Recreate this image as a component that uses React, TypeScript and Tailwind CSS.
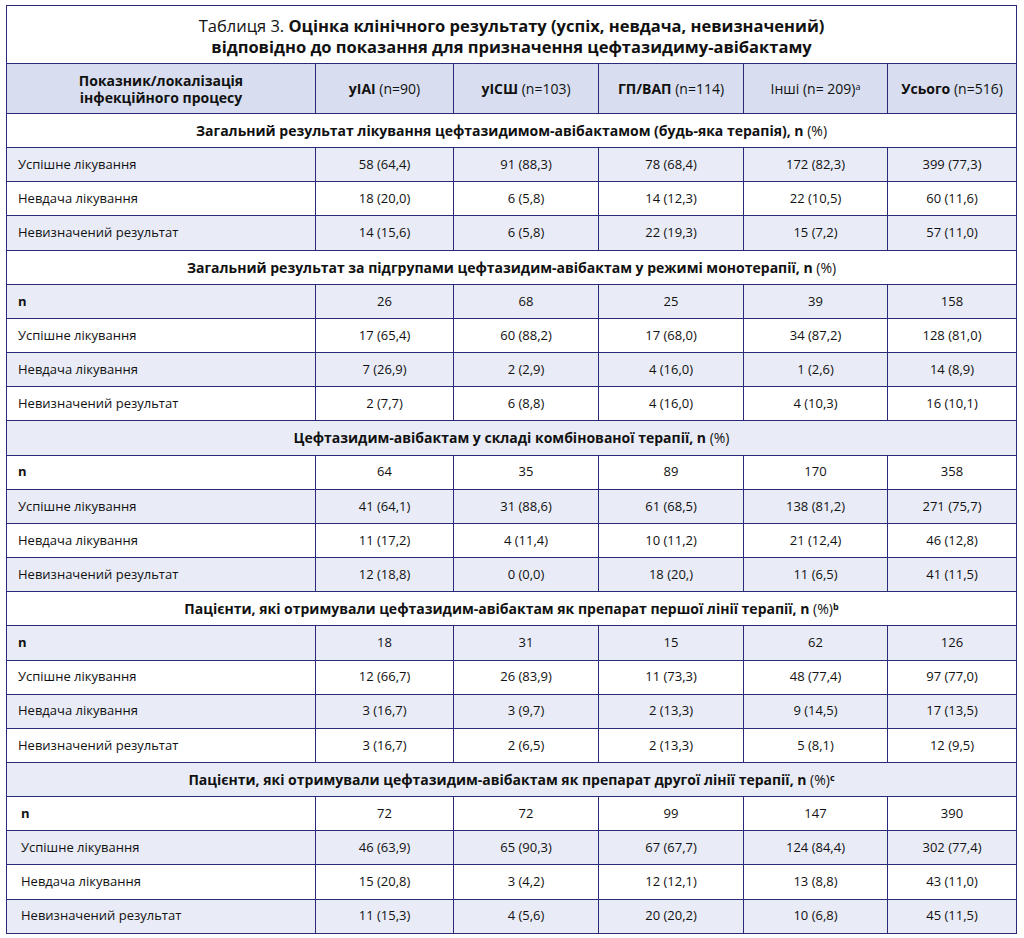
const cols = [
  { bold: "уІАІ", rest: " (n=90)" },
  { bold: "уІСШ", rest: " (n=103)" },
  { bold: "ГП/ВАП", rest: " (n=114)" },
  { bold: "", rest: "Інші (n= 209)", sup: "a" },
  { bold: "Усього", rest: " (n=516)" },
];

type Section = {
  title: string;
  sup?: string;
  rows: [string, string[]][];
};

const sections: Section[] = [
  {
    title: "Загальний результат лікування цефтазидимом-авібактамом (будь-яка терапія), n",
    rows: [
      ["Успішне лікування", ["58 (64,4)", "91 (88,3)", "78 (68,4)", "172 (82,3)", "399 (77,3)"]],
      ["Невдача лікування", ["18 (20,0)", "6 (5,8)", "14 (12,3)", "22 (10,5)", "60 (11,6)"]],
      ["Невизначений результат", ["14 (15,6)", "6 (5,8)", "22 (19,3)", "15 (7,2)", "57 (11,0)"]],
    ],
  },
  {
    title: "Загальний результат за підгрупами цефтазидим-авібактам у режимі монотерапії, n",
    rows: [
      ["n", ["26", "68", "25", "39", "158"]],
      ["Успішне лікування", ["17 (65,4)", "60 (88,2)", "17 (68,0)", "34 (87,2)", "128 (81,0)"]],
      ["Невдача лікування", ["7 (26,9)", "2 (2,9)", "4 (16,0)", "1 (2,6)", "14 (8,9)"]],
      ["Невизначений результат", ["2 (7,7)", "6 (8,8)", "4 (16,0)", "4 (10,3)", "16 (10,1)"]],
    ],
  },
  {
    title: "Цефтазидим-авібактам у складі комбінованої терапії, n",
    rows: [
      ["n", ["64", "35", "89", "170", "358"]],
      ["Успішне лікування", ["41 (64,1)", "31 (88,6)", "61 (68,5)", "138 (81,2)", "271 (75,7)"]],
      ["Невдача лікування", ["11 (17,2)", "4 (11,4)", "10 (11,2)", "21 (12,4)", "46 (12,8)"]],
      ["Невизначений результат", ["12 (18,8)", "0 (0,0)", "18 (20,)", "11 (6,5)", "41 (11,5)"]],
    ],
  },
  {
    title: "Пацієнти, які отримували цефтазидим-авібактам як препарат першої лінії терапії, n",
    sup: "b",
    rows: [
      ["n", ["18", "31", "15", "62", "126"]],
      ["Успішне лікування", ["12 (66,7)", "26 (83,9)", "11 (73,3)", "48 (77,4)", "97 (77,0)"]],
      ["Невдача лікування", ["3 (16,7)", "3 (9,7)", "2 (13,3)", "9 (14,5)", "17 (13,5)"]],
      ["Невизначений результат", ["3 (16,7)", "2 (6,5)", "2 (13,3)", "5 (8,1)", "12 (9,5)"]],
    ],
  },
  {
    title: "Пацієнти, які отримували цефтазидим-авібактам як препарат другої лінії терапії, n",
    sup: "c",
    rows: [
      ["n", ["72", "72", "99", "147", "390"]],
      ["Успішне лікування", ["46 (63,9)", "65 (90,3)", "67 (67,7)", "124 (84,4)", "302 (77,4)"]],
      ["Невдача лікування", ["15 (20,8)", "3 (4,2)", "12 (12,1)", "13 (8,8)", "43 (11,0)"]],
      ["Невизначений результат", ["11 (15,3)", "4 (5,6)", "20 (20,2)", "10 (6,8)", "45 (11,5)"]],
    ],
  },
];

const App = () => {
  let stripe = 0;

  return (
    <div className="min-h-[938px] bg-white pl-[6px] pt-[5px] font-medium text-[#111111] [font-family:'Open_Sans',Lato,sans-serif]">
      <table className="w-[1010px] table-fixed border-collapse text-[13px]">
        <colgroup>
          <col className="w-[309px]" />
          <col className="w-[138px]" />
          <col className="w-[145px]" />
          <col className="w-[145px]" />
          <col className="w-[144px]" />
          <col className="w-[129px]" />
        </colgroup>
        <tbody>
          {/* Title */}
          <tr className="h-[58px]">
            <td colSpan={6} className="border border-[#2b2a78] pt-[2px] text-center text-[16.5px] leading-[21px]">
              <span className="font-normal">Таблиця 3.</span> <b>Оцінка клінічного результату (успіх, невдача, невизначений)</b>
              <br />
              <b>відповідно до показання для призначення цефтазидиму-авібактаму</b>
            </td>
          </tr>

          {/* Column headers */}
          <tr className="h-[50px] bg-[#d8def0] text-[14px]">
            <td className="border border-[#2b2a78] text-center font-bold leading-[17px]">
              Показник/локалізація
              <br />
              інфекційного процесу
            </td>
            {cols.map((c, i) => (
              <td key={i} className="border border-[#2b2a78] text-center">
                {c.bold && <b>{c.bold}</b>}
                {c.rest}
                {c.sup && <sup className="text-[9px]">{c.sup}</sup>}
              </td>
            ))}
          </tr>

          {sections.map((s, si) => {
            const headBlue = stripe++ % 2 === 1;
            return [
              <tr key={`s${si}`} className={`h-[34.17px] ${headBlue ? "bg-[#e9ecf7]" : "bg-white"}`}>
                <td colSpan={6} className="border border-[#2b2a78] text-center text-[14px] font-bold">
                  {s.title} <span className="font-medium">(%)</span>
                  {s.sup && <sup className="text-[9px] font-bold">{s.sup}</sup>}
                </td>
              </tr>,
              ...s.rows.map(([label, vals], ri) => {
                const blue = stripe++ % 2 === 1;
                return (
                  <tr key={`r${si}-${ri}`} className={`h-[34.17px] ${blue ? "bg-[#e9ecf7]" : "bg-white"}`}>
                    <td
                      className={`border border-[#2b2a78] ${si === 4 ? "pl-[14px]" : "pl-[11px]"} ${
                        label === "n" ? "font-bold" : ""
                      }`}
                    >
                      {label}
                    </td>
                    {vals.map((v, vi) => (
                      <td key={vi} className="border border-[#2b2a78] text-center">
                        {v}
                      </td>
                    ))}
                  </tr>
                );
              }),
            ];
          })}
        </tbody>
      </table>
    </div>
  );
};

export default App;
